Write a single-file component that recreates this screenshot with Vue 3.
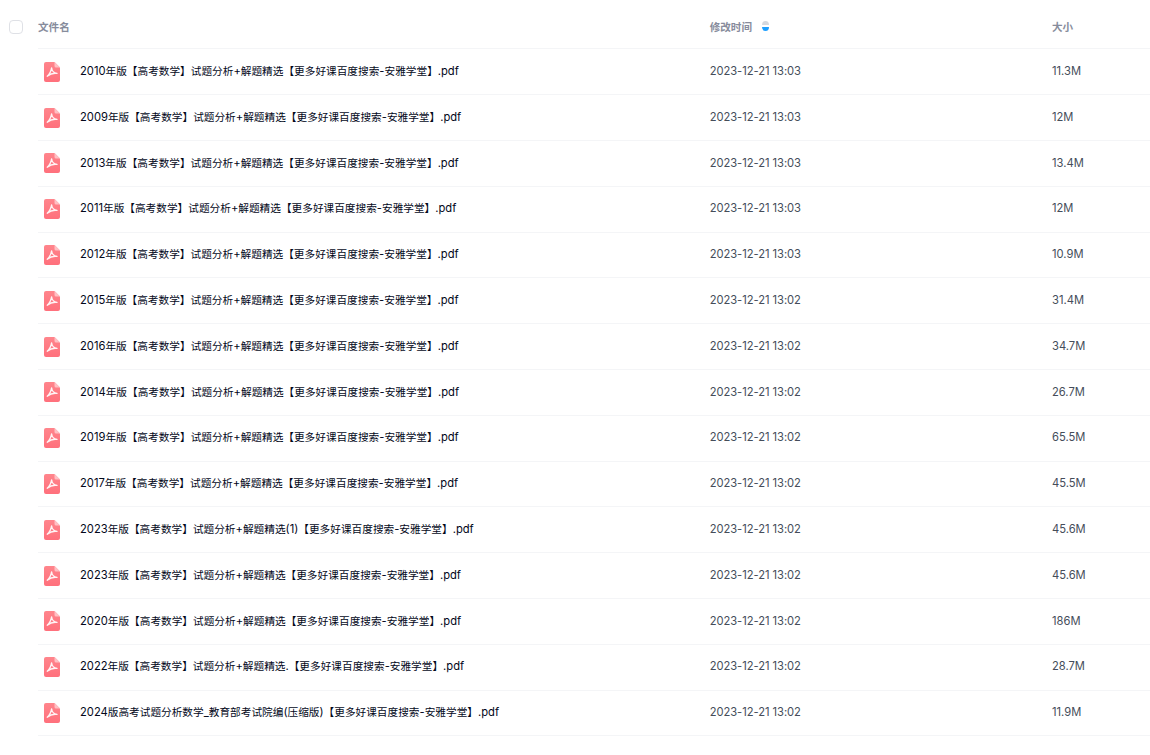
<script setup>
const t3 = '2023-12-21 13:03'
const t2 = '2023-12-21 13:02'
const s = '试题分析+解题精选【更多好课百度搜索-安雅学堂】.pdf'
const files = [
  { name: `2010年版【高考数学】${s}`, time: t3, size: '11.3M' },
  { name: `2009年版【高考数学】${s}`, time: t3, size: '12M' },
  { name: `2013年版【高考数学】${s}`, time: t3, size: '13.4M' },
  { name: `2011年版【高考数学】${s}`, time: t3, size: '12M' },
  { name: `2012年版【高考数学】${s}`, time: t3, size: '10.9M' },
  { name: `2015年版【高考数学】${s}`, time: t2, size: '31.4M' },
  { name: `2016年版【高考数学】${s}`, time: t2, size: '34.7M' },
  { name: `2014年版【高考数学】${s}`, time: t2, size: '26.7M' },
  { name: `2019年版【高考数学】${s}`, time: t2, size: '65.5M' },
  { name: `2017年版【高考数学】${s}`, time: t2, size: '45.5M' },
  { name: '2023年版【高考数学】试题分析+解题精选(1)【更多好课百度搜索-安雅学堂】.pdf', time: t2, size: '45.6M' },
  { name: `2023年版【高考数学】${s}`, time: t2, size: '45.6M' },
  { name: `2020年版【高考数学】${s}`, time: t2, size: '186M' },
  { name: '2022年版【高考数学】试题分析+解题精选.【更多好课百度搜索-安雅学堂】.pdf', time: t2, size: '28.7M' },
  { name: '2024版高考试题分析数学_教育部考试院编(压缩版)【更多好课百度搜索-安雅学堂】.pdf', time: t2, size: '11.9M' },
]
const parts = (name) => name.split(/([\u3000-\u9fff]+)/)
</script>

<template>
  <div class="page">
    <div class="head">
      <span class="check"></span>
      <div class="cols head-cols">
        <span class="name-h">文件名</span>
        <span class="time-h">
          修改时间
          <svg class="sort" width="9" height="12" viewBox="0 0 9 12">
            <path d="M1 5 A3.5 4 0 0 1 8 5 Z" fill="#d5d8de" />
            <path d="M1 7 A3.5 4 0 0 0 8 7 Z" fill="#1e9fff" />
          </svg>
        </span>
        <span class="size-h">大小</span>
      </div>
    </div>
    <div v-for="f in files" :key="f.name + f.size" class="cols row">
      <div class="name">
        <svg class="pdf" width="16" height="20" viewBox="0 0 16 20">
          <defs>
            <linearGradient id="pdfgrad" x1="0" y1="0" x2="0" y2="1">
              <stop offset="0" stop-color="#ff858c" />
              <stop offset="1" stop-color="#ff707c" />
            </linearGradient>
          </defs>
          <path d="M2 0H10.5L16 5.5V18a2 2 0 0 1-2 2H2a2 2 0 0 1-2-2V2a2 2 0 0 1 2-2Z" fill="url(#pdfgrad)" />
          <path d="M10.5 0L16 5.5H12a1.5 1.5 0 0 1-1.5-1.5Z" fill="#ffc0c4" />
          <path d="M7.6 5.8C7.1 8.6 5.6 12.2 3.2 14.2M7.6 5.8C7.9 8.6 9.6 11 13 11.4C10.5 11 7 11.2 3.2 14.2" fill="none" stroke="#fff" stroke-opacity=".92" stroke-width="1.3" stroke-linecap="round" stroke-linejoin="round" />
        </svg>
        <span class="title">
          <span v-for="(p, i) in parts(f.name)" :key="i" :class="{ cjk: i % 2 === 1 }">{{ p }}</span>
        </span>
      </div>
      <span class="time">{{ f.time }}</span>
      <span class="size">{{ f.size }}</span>
    </div>
  </div>
</template>

<style>
body { margin: 0; background: #fff; }
</style>

<style scoped>
.page {
  width: 1150px;
  height: 755px;
  overflow: hidden;
  box-sizing: border-box;
  padding-left: 38px;
  position: relative;
  font-family: Inter, "Noto Sans CJK SC", sans-serif;
  font-size: 11.2px;
  background: #fff;
}
.head { height: 48.4px; }
.check {
  position: absolute;
  left: 9px;
  top: 20px;
  width: 14px;
  height: 14px;
  box-sizing: border-box;
  border: 1px solid #dfe1e6;
  border-radius: 4px;
}
.cols {
  display: grid;
  grid-template-columns: 671.7px 342.3px 1fr;
  align-items: center;
}
.head-cols {
  height: 53px;
  color: #878c9c;
  font-weight: 600;
  font-size: 10.6px;
}
.time-h { position: relative; top: -0.5px; display: flex; align-items: center; gap: 9px; }
.row {
  height: 45.8px;
  box-sizing: border-box;
  border-top: 1px solid #f4f5f7;
  padding-bottom: 1.5px;
  color: #03081a;
}
.row:last-child { border-bottom: 1px solid #f4f5f7; height: 46.8px; }
.name { display: flex; align-items: center; min-width: 0; }
.pdf { margin-left: 6px; margin-top: 1.5px; flex: none; }
.title {
  margin-left: 20px;
  margin-bottom: 1px;
  white-space: nowrap;
}
.cjk { font-size: 10.67px; }
.time { color: #454d5a; letter-spacing: -0.05px; }
.size { color: #454d5a; }
</style>
